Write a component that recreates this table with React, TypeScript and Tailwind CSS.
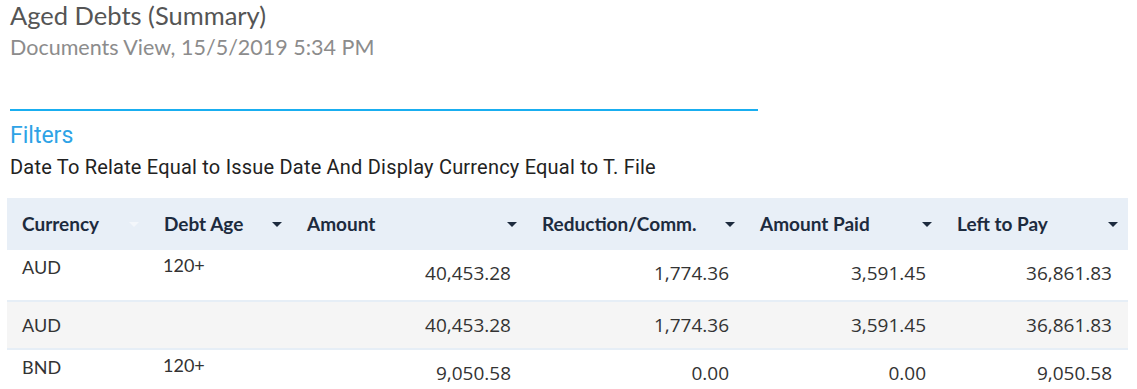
import React from 'react';

interface Row {
    currency: string;
    age: string;
    amount: string;
    reduction: string;
    paid: string;
    left: string;
    total?: boolean;
}

const rows: Row[] = [
    { currency: 'AUD', age: '120+', amount: '40,453.28', reduction: '1,774.36', paid: '3,591.45', left: '36,861.83' },
    { currency: 'AUD', age: '', amount: '40,453.28', reduction: '1,774.36', paid: '3,591.45', left: '36,861.83', total: true },
    { currency: 'BND', age: '120+', amount: '9,050.58', reduction: '0.00', paid: '0.00', left: '9,050.58' },
];

const columns = [
    { label: 'Currency', faded: true },
    { label: 'Debt Age' },
    { label: 'Amount' },
    { label: 'Reduction/Comm.' },
    { label: 'Amount Paid' },
    { label: 'Left to Pay' },
];

const grid = 'grid grid-cols-[142px_143px_235px_218px_197px_186px]';

const Caret = ({ faded }: { faded?: boolean }) => (
    <svg width="10" height="5" viewBox="0 0 10 5" className="shrink-0">
        <path d="M0 0h10L5 5z" fill={faded ? '#f4f7fb' : '#1d2b3e'} />
    </svg>
);

const App: React.FC = () => {
    return (
        <div className="w-[1137px] h-[389px] overflow-hidden bg-white font-['Lato',sans-serif]">
            <div className="pl-[10px]">
                <h1 className="text-[25.5px] leading-[30px] text-[#555555]">
                    Aged Debts (Summary)
                </h1>
                <p className="mt-[4px] text-[21.5px] leading-[26px] text-[#8c8c8c]">
                    Documents View, 15/5/2019 5:34 PM
                </p>
                <div className="mt-[49px] h-[2px] w-[748px] bg-[#19aef0]" />
                <div className="font-['Roboto',sans-serif]">
                    <p className="mt-[12px] text-[23px] leading-[26px] text-[#2ea3e6]">
                        Filters
                    </p>
                    <p className="mt-[5px] text-[20px] leading-[26px] tracking-[0.2px] text-[#222222]">
                        Date To Relate Equal to Issue Date And Display Currency Equal to T. File
                    </p>
                </div>
            </div>

            <div className="ml-[7px] mt-[18px] w-[1121px]">
                <div className={`${grid} h-[52px] bg-[#e8eff7]`}>
                    {columns.map((col) => (
                        <div
                            key={col.label}
                            className="flex items-center justify-between pl-[15px] pr-[10px] text-[19px] font-bold text-[#1d2b3e]"
                        >
                            <span>{col.label}</span>
                            <Caret faded={col.faded} />
                        </div>
                    ))}
                </div>

                {rows.map((row, i) => (
                    <div
                        key={i}
                        className={`${grid} h-[50px] text-[18px] leading-[22px] text-[#333333] ${
                            row.total ? 'bg-[#f5f5f5] border-y-2 border-[#e6eef6]' : ''
                        }`}
                    >
                        <div className={`pl-[15px] ${row.total ? 'self-center' : 'pt-[6px]'}`}>
                            {row.currency}
                        </div>
                        <div className="pl-[14px] pt-[4px]">{row.age}</div>
                        {[row.amount, row.reduction, row.paid, row.left].map((v, j) => (
                            <div
                                key={j}
                                className={`pr-[16px] text-right font-['Open_Sans',sans-serif] text-[19px] ${
                                    row.total ? 'self-center' : 'pt-[12px]'
                                }`}
                            >
                                {v}
                            </div>
                        ))}
                    </div>
                ))}
            </div>
        </div>
    );
};

export default App;
